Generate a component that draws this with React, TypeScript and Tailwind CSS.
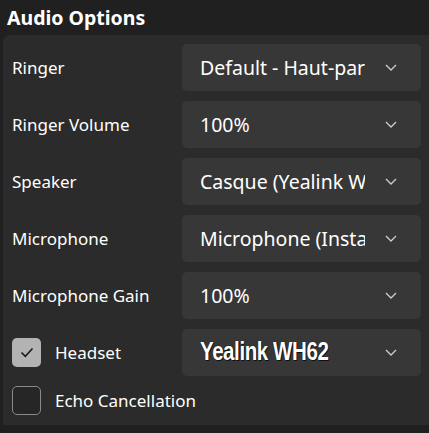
import { ReactNode } from "react"

const rows = [
  { label: "Ringer", value: "Default - Haut-parleurs" },
  { label: "Ringer Volume", value: "100%" },
  { label: "Speaker", value: "Casque (Yealink WH62)" },
  { label: "Microphone", value: "Microphone (Insta360 Link)" },
  { label: "Microphone Gain", value: "100%" },
]

function Chevron() {
  return (
    <svg width="12" height="7" viewBox="0 0 12 7" className="shrink-0">
      <path d="M1 1l5 5 5-5" fill="none" stroke="#cfcfcf" strokeWidth="1.3" />
    </svg>
  )
}

function Select({ children }: { children: ReactNode }) {
  return (
    <div className="flex h-[47px] w-[239px] items-center rounded-[5px] bg-[#373737] pl-[18px] pr-[24px]">
      <div className="flex-1 overflow-hidden whitespace-nowrap text-[19.5px] text-white">{children}</div>
      <div className="flex w-[32px] justify-end">
        <Chevron />
      </div>
    </div>
  )
}

function Checkbox({ checked }: { checked?: boolean }) {
  return checked ? (
    <div className="flex h-[29px] w-[29px] items-center justify-center rounded-[5px] bg-[#b3b3b3]">
      <svg width="14" height="11" viewBox="0 0 14 11">
        <path d="M1.5 5.5l3.8 3.8L12.5 1.5" fill="none" stroke="#1a1a1a" strokeWidth="1.6" />
      </svg>
    </div>
  ) : (
    <div className="h-[29px] w-[29px] rounded-[5px] border border-[#8a8a8a] bg-[#262626]" />
  )
}

export default function App() {
  return (
    <div className="h-[433px] w-[429px] overflow-hidden bg-[#202020] font-['Noto_Sans','Open_Sans',sans-serif] text-white">
      <h1 className="h-[35px] pl-[7px] pt-[6px] text-[19.5px] font-bold leading-[24px]">Audio Options</h1>
      <div className="ml-[3px] rounded-tl-[8px] bg-[#2b2b2b] pb-[10px] pl-[9px] pt-[9px]">
        <div className="flex flex-col gap-[10px]">
          {rows.map((r) => (
            <div key={r.label} className="flex items-center">
              <div className="w-[170px] text-[17px]">{r.label}</div>
              <Select>{r.value}</Select>
            </div>
          ))}
          <div className="flex items-center">
            <div className="flex w-[170px] items-center gap-[14px]">
              <Checkbox checked />
              <span className="text-[17px]">Headset</span>
            </div>
            <Select>
              <span className="inline-block origin-left scale-x-[0.82] font-['Liberation_Sans',sans-serif] text-[25px] font-bold leading-none tracking-[-0.5px] [text-shadow:0_0_1px_#000,1px_1px_0_#111]">
                Yealink WH62
              </span>
            </Select>
          </div>
        </div>
        <div className="mt-[10px] flex items-center gap-[14px]">
          <Checkbox />
          <span className="text-[17px]">Echo Cancellation</span>
        </div>
      </div>
    </div>
  )
}
